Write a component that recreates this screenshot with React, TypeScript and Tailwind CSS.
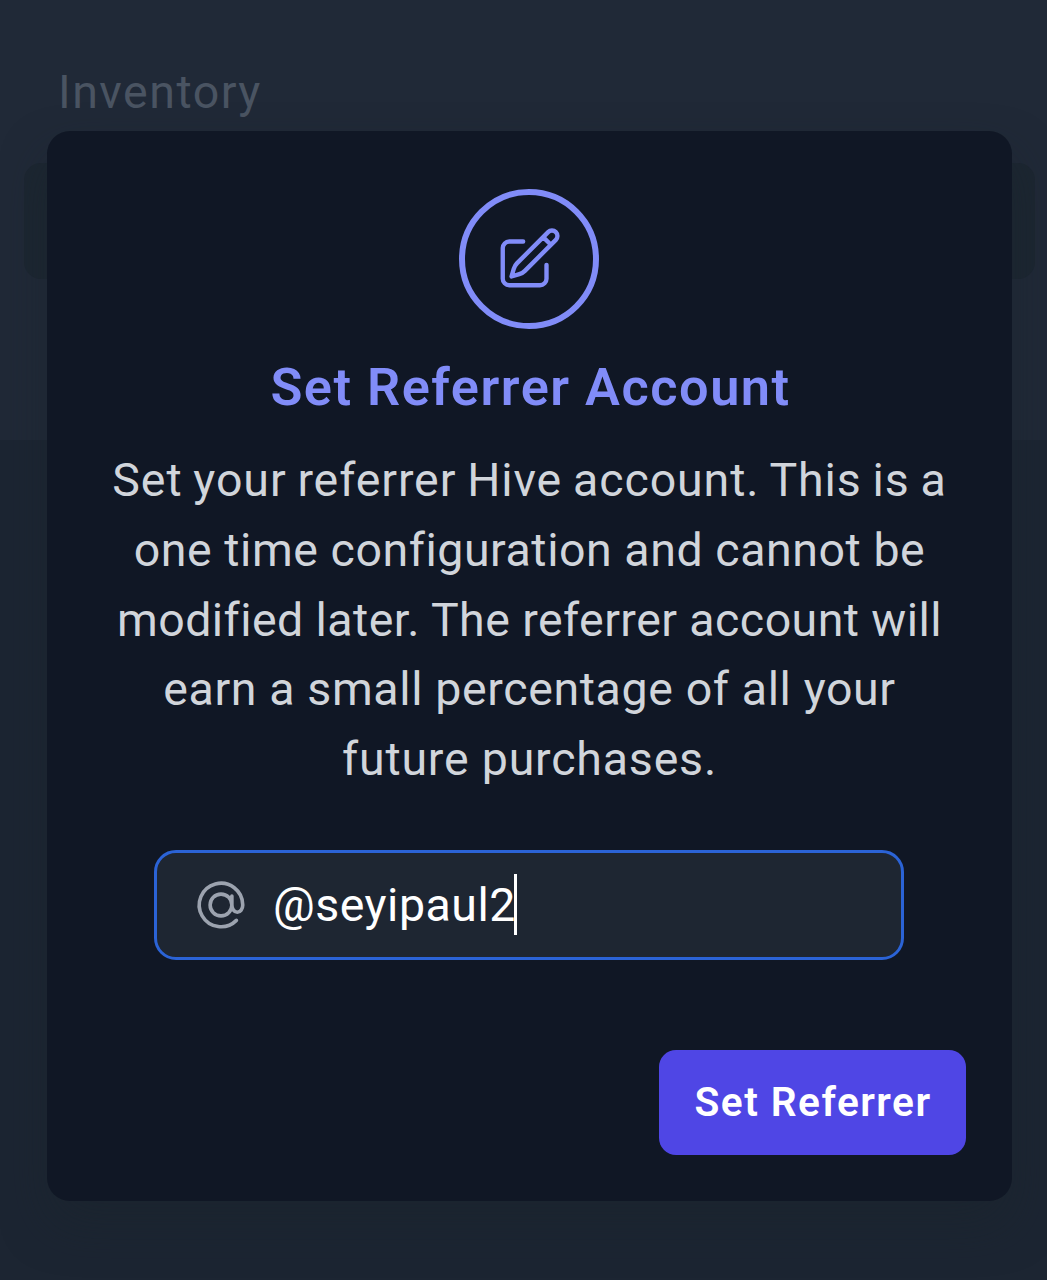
function PencilSquareIcon() {
  return (
    <svg className="size-[70px]" viewBox="0 0 24 24" fill="none" stroke="currentColor" strokeWidth={1.5} strokeLinecap="round" strokeLinejoin="round">
      <path d="m16.862 4.487 1.687-1.688a1.875 1.875 0 1 1 2.652 2.652L10.582 16.07a4.5 4.5 0 0 1-1.897 1.13L6 18l.8-2.685a4.5 4.5 0 0 1 1.13-1.897l8.932-8.931Zm0 0L19.5 7.125M18 14v4.75A2.25 2.25 0 0 1 15.75 21H5.25A2.25 2.25 0 0 1 3 18.75V8.25A2.25 2.25 0 0 1 5.25 6H10" />
    </svg>
  );
}

function AtSymbolIcon() {
  return (
    <svg className="size-[58px] shrink-0 text-[#9ca3af]" viewBox="0 0 24 24" fill="none" stroke="currentColor" strokeWidth={1.5} strokeLinecap="round" strokeLinejoin="round">
      <path d="M16.5 12a4.5 4.5 0 1 1-9 0 4.5 4.5 0 0 1 9 0Zm0 0c0 1.657 1.007 3 2.25 3S21 13.657 21 12a9 9 0 1 0-2.636 6.364M16.5 12V8.25" />
    </svg>
  );
}

function ReferrerDialog() {
  return (
    <div className="flex h-[1070px] w-[965px] flex-col items-center rounded-[23px] bg-[#101725] pt-[58px] shadow-[0_24px_48px_-4px_rgba(25,35,43,0.5)]">
      <div className="mr-px flex size-[140px] shrink-0 items-center justify-center rounded-full border-[6px] border-[#818cf8] text-[#818cf8]">
        <PencilSquareIcon />
      </div>
      <h2 className="mt-[23px] ml-[2px] text-[52.3px] leading-[70px] font-semibold tracking-[1.5px] whitespace-nowrap text-[#818cf8]">
        Set Referrer Account
      </h2>
      <p className="mt-[24px] text-center text-[46.5px] leading-[69.8px] whitespace-nowrap text-[#d1d5db]">
        <span className="block tracking-[0.9px] [word-spacing:-1.6px]">Set your referrer Hive account. This is a</span>
        <span className="block tracking-[0.55px]">one time configuration and cannot be</span>
        <span className="block tracking-[0.43px]">modified later. The referrer account will</span>
        <span className="block tracking-[0.62px]">earn a small percentage of all your</span>
        <span className="block tracking-[0.8px]">future purchases.</span>
      </p>
      <div className="mt-[55px] mr-px flex h-[110px] w-[750px] shrink-0 items-center rounded-[22px] border-3 border-[#2b63d6] bg-[#1e2632] pl-[35px]">
        <AtSymbolIcon />
        <span className="ml-[23px] text-[46.5px] leading-[70px] tracking-[0.5px] text-white">@seyipaul2</span>
        <span className="-ml-[2px] h-[61px] w-[3px] bg-white" />
      </div>
      <button className="mt-[90px] mr-[46px] h-[105px] w-[307px] shrink-0 self-end rounded-[17px] bg-[#4f46e5] pt-px pl-px text-[40.7px] font-semibold tracking-[1.45px] whitespace-nowrap text-white">
        Set Referrer
      </button>
    </div>
  );
}

export default function App() {
  return (
    <div className="relative h-[1280px] w-full overflow-hidden bg-[#1c2532] font-[Roboto,sans-serif]">
      <div className="h-[440px] bg-[#202937] px-[24px] pt-[57px]">
        <h1 className="pl-[34px] text-[46.5px] leading-[70px] tracking-[1.5px] text-[#4a5462]">Inventory</h1>
        <div className="mt-[36px] h-[116px] w-[1011px] rounded-[17px] bg-[#1c2631]" />
      </div>
      <div className="absolute inset-0 flex items-start justify-center pt-[131px] pl-[12px]">
        <ReferrerDialog />
      </div>
    </div>
  );
}
